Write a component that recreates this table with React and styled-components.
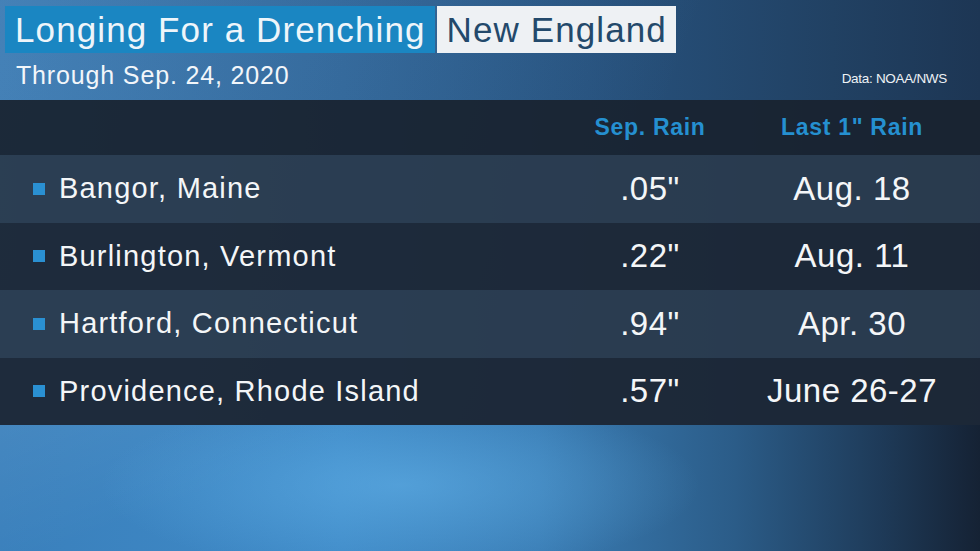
import React from "react";
import styled, { createGlobalStyle } from "styled-components";

const Global = createGlobalStyle`
  html, body { margin: 0; padding: 0; background: #1b2a3c; }
  body { font-family: "Liberation Sans", Arial, sans-serif; }
`;

const Stage = styled.div`
  position: relative;
  width: 980px;
  height: 551px;
  overflow: hidden;
  display: flex;
  flex-direction: column;
  background:
    linear-gradient(110deg, rgba(120, 180, 230, 0.22) 0%, rgba(120, 180, 230, 0.08) 40%, rgba(0,0,0,0) 60%),
    linear-gradient(90deg, #3673aa 0%, #2d6193 35%, #27527e 60%, #214163 85%, #1d3654 100%);
`;

const Header = styled.header`
  padding: 6px 33px 0 5px;
  height: 100px;
  box-sizing: border-box;
`;

const TitleRow = styled.div`
  display: flex;
  align-items: stretch;
  gap: 2px;
  height: 47px;
`;

const TitleBox = styled.div`
  display: flex;
  align-items: center;
  padding: 0 9px 0 10px;
  font-size: 35px;
  letter-spacing: 1.1px;
  line-height: 1;
  background: ${(p) => (p.$light ? "#eef1f4" : "#1a86c2")};
  color: ${(p) => (p.$light ? "#23496b" : "#eef5fa")};
  white-space: nowrap;
`;

const SubRow = styled.div`
  display: flex;
  justify-content: space-between;
  align-items: flex-end;
  padding-left: 11px;
  margin-top: 7px;
`;

const Subtitle = styled.div`
  color: #f2f6fa;
  font-size: 25px;
  letter-spacing: 0.85px;
  line-height: 30px;
`;

const Credit = styled.div`
  color: #eef2f6;
  font-size: 13.5px;
  letter-spacing: -0.3px;
  padding-bottom: 4px;
`;

const Table = styled.div`
  display: flex;
  flex-direction: column;
`;

const Row = styled.div`
  display: grid;
  grid-template-columns: 560px 180px 224px 1fr;
  align-items: center;
  height: ${(p) => (p.$head ? "55px" : "67.5px")};
  background: ${(p) =>
    p.$head
      ? "rgba(25, 34, 47, 0.93)"
      : p.$shade
      ? "rgba(42, 59, 78, 0.95)"
      : "rgba(28, 39, 54, 0.95)"};
`;

const City = styled.div`
  display: flex;
  align-items: center;
  gap: 14px;
  padding-left: 33px;
  color: #f4f6f8;
  font-size: 29px;
  letter-spacing: 1.2px;
  white-space: nowrap;
`;

const Bullet = styled.span`
  width: 12px;
  height: 12px;
  background: #2a90d2;
  flex: none;
`;

const Cell = styled.div`
  text-align: center;
  color: ${(p) => (p.$head ? "#2590d0" : "#f4f6f8")};
  font-size: ${(p) => (p.$head ? "23px" : "33px")};
  letter-spacing: ${(p) => (p.$head ? "0.7px" : "0.5px")};
  font-weight: ${(p) => (p.$head ? 700 : 400)};
  white-space: nowrap;
`;

const Footer = styled.div`
  flex: 1;
  background:
    radial-gradient(ellipse 300px 90px at 400px 60px, rgba(100, 180, 235, 0.55), rgba(100, 180, 235, 0) 100%),
    linear-gradient(160deg, rgba(255,255,255,0.06) 0%, rgba(255,255,255,0) 30%),
    linear-gradient(90deg, #3a80bc 0%, #3f8ac7 35%, #3a7db5 55%, #2b5c88 75%, #1e3a58 90%, #152234 100%);
`;

const rows = [
  ["Bangor, Maine", '.05"', "Aug. 18"],
  ["Burlington, Vermont", '.22"', "Aug. 11"],
  ["Hartford, Connecticut", '.94"', "Apr. 30"],
  ["Providence, Rhode Island", '.57"', "June 26-27"],
];

export default function App() {
  return (
    <>
      <Global />
      <Stage>
        <Header>
          <TitleRow>
            <TitleBox>Longing For a Drenching</TitleBox>
            <TitleBox $light>New England</TitleBox>
          </TitleRow>
          <SubRow>
            <Subtitle>Through Sep. 24, 2020</Subtitle>
            <Credit>Data: NOAA/NWS</Credit>
          </SubRow>
        </Header>
        <Table>
          <Row $head>
            <div />
            <Cell $head>Sep. Rain</Cell>
            <Cell $head>Last 1" Rain</Cell>
            <div />
          </Row>
          {rows.map((r, i) => (
            <Row key={r[0]} $shade={i % 2 === 0}>
              <City>
                <Bullet />
                {r[0]}
              </City>
              <Cell>{r[1]}</Cell>
              <Cell>{r[2]}</Cell>
              <div />
            </Row>
          ))}
        </Table>
        <Footer />
      </Stage>
    </>
  );
}
